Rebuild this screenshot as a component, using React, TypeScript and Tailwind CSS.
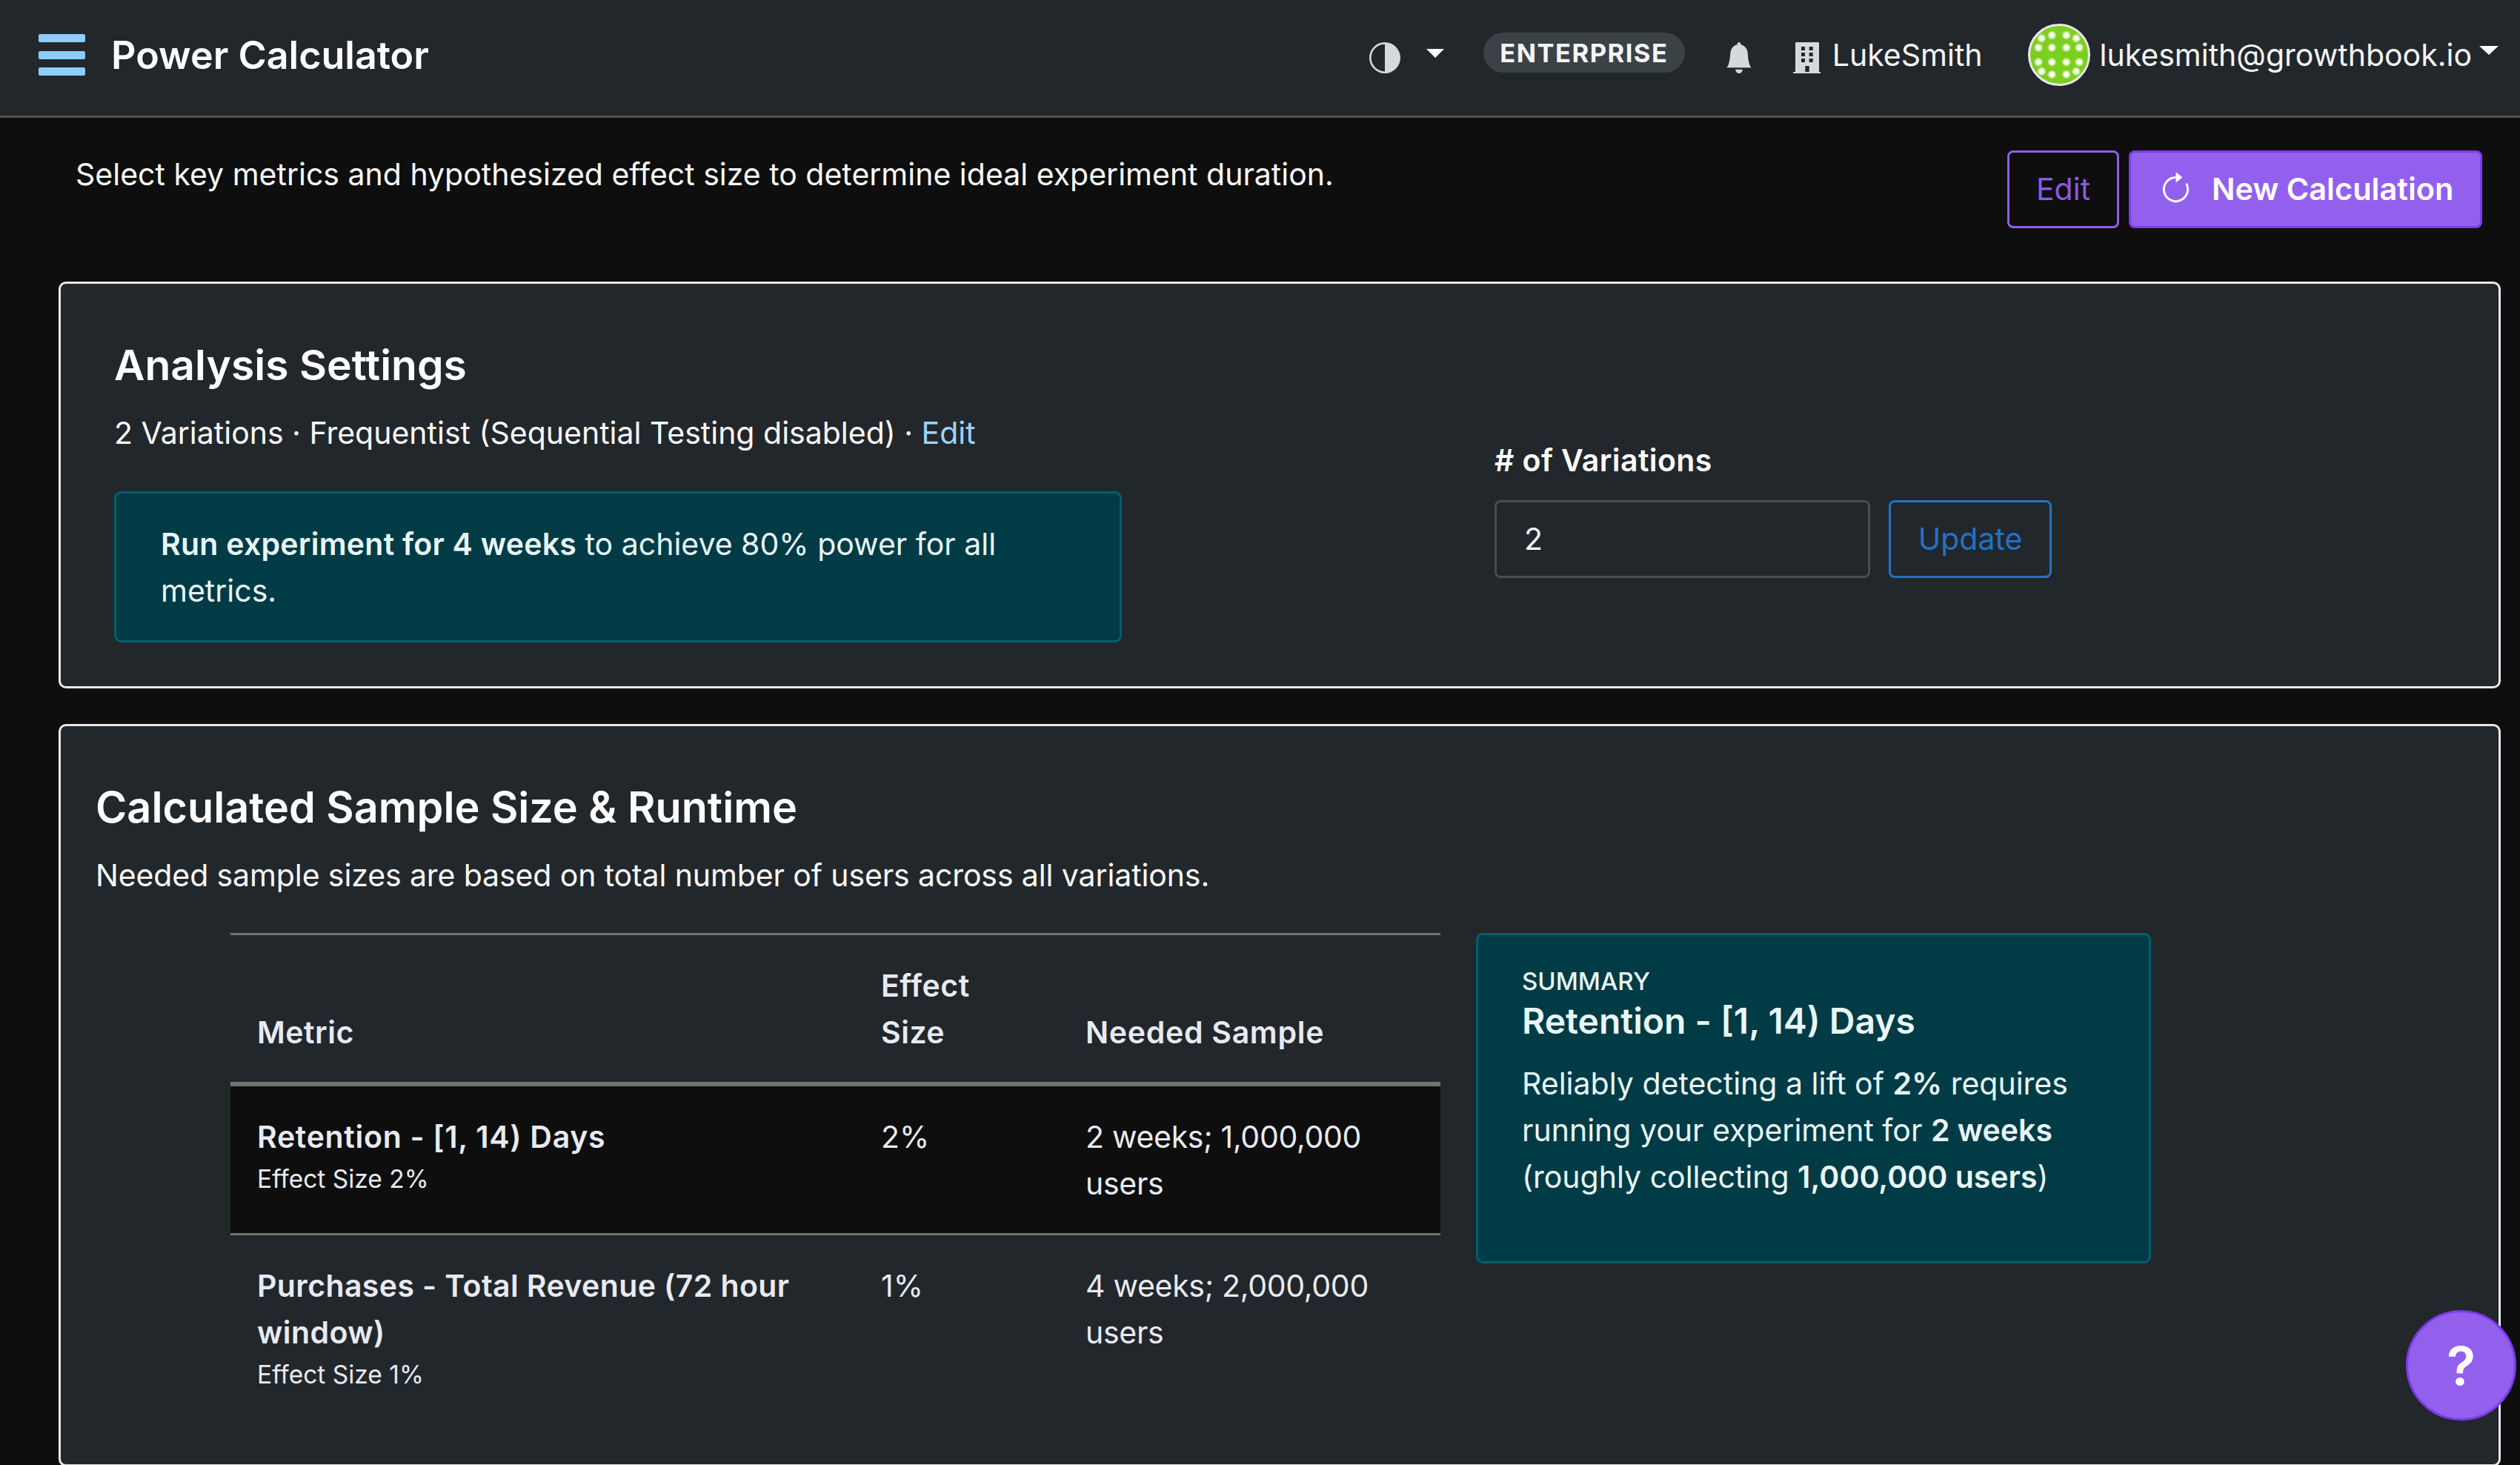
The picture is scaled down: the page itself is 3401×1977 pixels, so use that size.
import React from "react";

const Caret = ({ className }: { className: string }) => (
  <svg viewBox="0 0 24 12" preserveAspectRatio="none" className={className} fill="currentColor"><path d="M0 0h24L12 12z" /></svg>
);

function Avatar() {
  const dots: React.ReactNode[] = [];
  const xs = [8, 21, 35, 47.5];
  const ys = [9, 21, 35, 47];
  xs.forEach((x, c) =>
    ys.forEach((y, r) => {
      const edgeX = c === 0 || c === 3;
      const edgeY = r === 0 || r === 3;
      const corner = edgeX && edgeY;
      dots.push(
        <circle
          key={`${r}-${c}`}
          cx={corner ? (c === 0 ? x + 3 : x - 3) : x}
          cy={corner ? (r === 0 ? y + 3 : y - 3) : y}
          r={4.6}
          fill="url(#dot)"
        />
      );
    })
  );
  return (
    <svg viewBox="0 0 56 56" className="block h-[84px] w-[84px] rounded-full border-[3px] border-[#e8e8e8] bg-[#7ccf1e]">
      <defs>
        <radialGradient id="dot">
          <stop offset="0%" stopColor="#ffffff" />
          <stop offset="45%" stopColor="#f4fbe8" />
          <stop offset="100%" stopColor="#ffffff" stopOpacity="0" />
        </radialGradient>
      </defs>
      {dots}
    </svg>
  );
}

function Callout({ className, children }: { className: string; children: React.ReactNode }) {
  return <div className={`rounded-[9px] border-[3px] border-[#005f6e] bg-[#003b46] text-[#e9f7f8] ${className}`}>{children}</div>;
}

export default function App() {
  return (
    <div className="relative h-[1977px] w-full overflow-hidden bg-[#0d0e0d] font-['Inter','Liberation_Sans',sans-serif] text-[37px] leading-[63px] text-[#fafafa]">
      <header className="flex h-[159px] items-center border-b-[3px] border-[#4e524e] bg-[#22272b] pb-[8px] pl-[52px] pr-[29px]">
        <div className="flex h-[56px] w-[63px] flex-col justify-between">
          <div className="h-[11px] rounded-[2px] bg-[#8dcdfd]" />
          <div className="h-[11px] rounded-[2px] bg-[#8dcdfd]" />
          <div className="h-[11px] rounded-[2px] bg-[#8dcdfd]" />
        </div>
        <h1 className="ml-[35px] text-[52px] font-semibold text-white">Power Calculator</h1>
        <div className="ml-auto flex items-center">
          <svg viewBox="0 0 16 16" className="mt-[8px] h-[42px] w-[42px] text-[#d3d9dc]" fill="currentColor">
            <path d="M8 15A7 7 0 1 0 8 1v14zm0 1A8 8 0 1 1 8 0a8 8 0 0 1 0 16z" transform="matrix(-1 0 0 1 16 0)" />
          </svg>
          <Caret className="mb-[4px] ml-[35px] h-[12px] w-[24px] text-white" />
          <span className="mb-[6px] ml-[53px] flex h-[54px] w-[272px] items-center justify-center rounded-full bg-[#3a4246] text-[34.5px] font-bold tracking-[1.5px] text-[#f5f5f5]">ENTERPRISE</span>
          <svg viewBox="0 0 16 16" className="ml-[54px] mt-[8px] h-[42px] w-[38px] text-[#d3d9dc]" fill="currentColor" preserveAspectRatio="none">
            <path d="M8 16a2 2 0 0 0 2-2H6a2 2 0 0 0 2 2zm.995-14.901a1 1 0 1 0-1.99 0A5.002 5.002 0 0 0 3 6c0 1.098-.5 6-2 7h14c-1.5-1-2-5.902-2-7 0-2.42-1.72-4.44-4.005-4.901z" />
          </svg>
          <svg viewBox="0 0 37 42" className="ml-[54px] mt-[8px] h-[42px] w-[37px] text-[#d3d9dc]" fill="currentColor">
            <path
              fillRule="evenodd"
              d="M4 0h30a1 1 0 0 1 1 1v39h2v2H0v-2h3V1a1 1 0 0 1 1-1zM11 6v5h5V6zm10.7 0v5h5V6zM11 14v5h5v-5zm10.7 0v5h5v-5zM11 22v5h5v-5zm10.7 0v5h5v-5zM16.3 32v8h5.4v-8z"
            />
          </svg>
          <span className="ml-[16px] text-[41px] text-[#f5f5f5]">LukeSmith</span>
          <span className="ml-[61px]"><Avatar /></span>
          <span className="ml-[13px] text-[41px] text-[#f5f5f5]">lukesmith@growthbook.io</span>
          <Caret className="mb-[12px] ml-[10px] h-[12px] w-[26px] text-white" />
        </div>
      </header>

      <main className="flex flex-col pl-[79px] pr-[26px]">
        <div className="flex items-start justify-between pl-[23px] pr-[25px] pt-[44px]">
          <p className="mt-[1px] text-[41px]">Select key metrics and hypothesized effect size to determine ideal experiment duration.</p>
          <div className="flex gap-[13px]">
            <button className="h-[105px] w-[151px] rounded-[8px] border-[3px] border-[#8f5ee8] text-[41px] text-[#8a5ae0]">Edit</button>
            <button className="flex h-[105px] w-[477px] items-center gap-[25px] rounded-[8px] border-[3px] border-[#7c3aed] bg-[#9360ee] pl-[37px] text-[41.5px] font-semibold text-white">
              <svg viewBox="0 0 16 16" className="h-[47px] w-[47px]" fill="currentColor">
                <path fillRule="evenodd" d="M8 3a5 5 0 1 0 4.546 2.914.5.5 0 0 1 .908-.417A6 6 0 1 1 8 2v1z" />
                <path d="M8 4.466V.534a.25.25 0 0 1 .41-.192l2.36 1.966c.12.1.12.284 0 .384L8.41 4.658A.25.25 0 0 1 8 4.466z" />
              </svg>
              New Calculation
            </button>
          </div>
        </div>

        <section className="mt-[72px] flex h-[549px] rounded-[10px] border-[3px] border-[#e8e8e8] bg-[#22272b] pl-[72px]">
          <div className="w-[1360px] pt-[70px]">
            <h2 className="text-[57px] font-semibold leading-[80px] text-white">Analysis Settings</h2>
            <p className="mt-[20px] text-[41px]">2 Variations · Frequentist (Sequential Testing disabled) · <span className="text-[#9bd3ff]">Edit</span></p>
            <Callout className="mt-[47px] h-[204px] pl-[60px] pt-[37px]">
              <p className="w-[1200px] text-[41px]"><b className="font-semibold tracking-[0.25px]">Run experiment for 4 weeks</b> to achieve 80% power for all metrics.</p>
            </Callout>
          </div>
          <div className="ml-[503px] pt-[207px]">
            <label className="block text-[41px] font-semibold tracking-[0.4px] text-white">&#35; of Variations</label>
            <div className="mt-[22px] flex gap-[25px]">
              <div className="flex h-[105px] w-[507px] items-center rounded-[8px] border-[3px] border-[#4a4d4e] pl-[37px] text-[41px]">2</div>
              <button className="h-[105px] w-[220px] rounded-[8px] border-[3px] border-[#2272c8] text-[41px] text-[#2272c8]">Update</button>
            </div>
          </div>
        </section>

        <section className="mt-[48px] h-[1002px] rounded-[10px] border-[3px] border-[#e8e8e8] bg-[#22272b] pl-[47px] pt-[69px]">
          <h2 className="text-[57.5px] font-semibold leading-[80px] text-white">Calculated Sample Size &amp; Runtime</h2>
          <p className="mt-[21px] text-[41px] tracking-[-0.11px]">Needed sample sizes are based on total number of users across all variations.</p>
          <div className="ml-[182px] mt-[46px] flex items-start gap-[48px]">
            <table className="w-[1633px] table-fixed border-collapse border-t-[3px] border-[#70756f] text-[41px] text-[#e8eaf2]">
              <thead>
                <tr className="border-b-[6px] border-[#70756f]">
                  <th className="w-[842px] px-[36px] pb-[35px] pt-[37px] text-left align-bottom font-semibold tracking-[0.5px]">Metric</th>
                  <th className="w-[276px] px-[36px] pb-[35px] pt-[37px] text-left align-bottom font-semibold tracking-[0.5px]">Effect Size</th>
                  <th className="px-[36px] pb-[35px] pt-[37px] text-left align-bottom font-semibold tracking-[0.7px]">Needed Sample</th>
                </tr>
              </thead>
              <tbody>
                <tr className="border-b-[3px] border-[#70756f] bg-[#0d0e0d]">
                  <td className="px-[36px] pb-[35px] pt-[37px] align-top">
                    <div className="font-semibold tracking-[0.7px]">Retention - [1, 14) Days</div>
                    <div className="text-[33.5px] leading-[50px]">Effect Size 2%</div>
                  </td>
                  <td className="px-[36px] pb-[35px] pt-[37px] align-top">2%</td>
                  <td className="px-[36px] pb-[35px] pt-[37px] align-top tracking-[-0.3px]">2 weeks; 1,000,000 users</td>
                </tr>
                <tr>
                  <td className="px-[36px] pb-[35px] pt-[37px] align-top">
                    <div className="font-semibold tracking-[0.4px]">Purchases - Total Revenue (72 hour window)</div>
                    <div className="text-[33.5px] leading-[50px]">Effect Size 1%</div>
                  </td>
                  <td className="px-[36px] pb-[35px] pt-[37px] align-top">1%</td>
                  <td className="px-[36px] pb-[35px] pt-[37px] align-top tracking-[-0.3px]">4 weeks; 2,000,000 users</td>
                </tr>
              </tbody>
            </table>
            <Callout className="h-[446px] w-[911px] pl-[59px] pt-[42px]">
              <div className="text-[33px] font-medium leading-[40px]">SUMMARY</div>
              <div className="mt-[6px] text-[48px] font-semibold leading-[56px]">Retention - [1, 14) Days</div>
              <p className="mt-[25px] text-[41px]">Reliably detecting a lift of <b className="font-semibold">2%</b> requires running your experiment for <b className="font-semibold">2 weeks</b> (roughly collecting <b className="font-semibold">1,000,000 users</b>)</p>
            </Callout>
          </div>
        </section>
      </main>

      <button className="absolute left-[3247px] top-[1768px] flex h-[149px] w-[149px] items-center justify-center rounded-full border-[3px] border-[#7c3aed] bg-[#9360ee] text-[72px] font-semibold text-white">?</button>
    </div>
  );
}
